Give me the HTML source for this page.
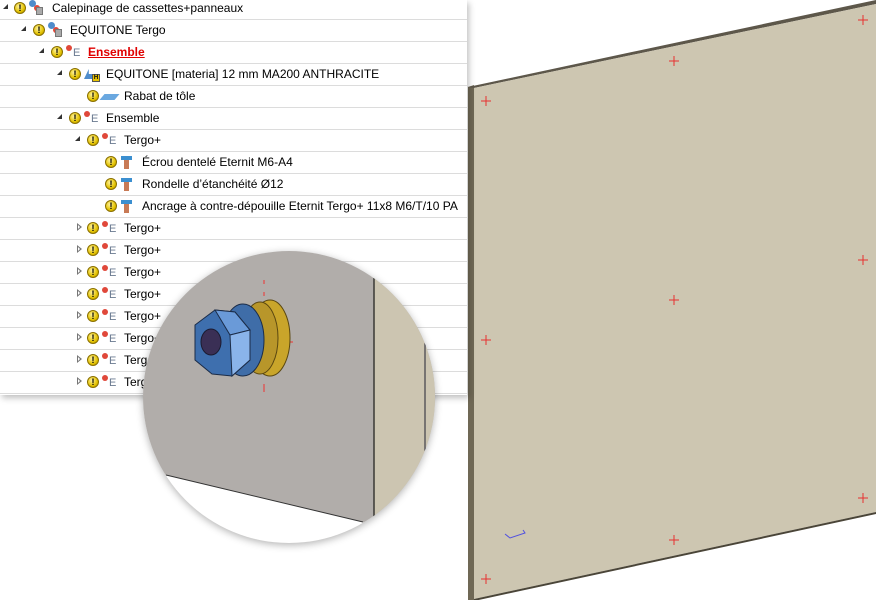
<!DOCTYPE html>
<html><head><meta charset="utf-8"><style>
*{margin:0;padding:0;box-sizing:border-box}
body{width:876px;height:600px;overflow:hidden;background:#fff;font-family:"Liberation Sans",sans-serif;font-size:12px;color:#000;position:relative}
#tree{position:absolute;left:0;top:0;width:467px;height:395px;background:#fff;box-shadow:2px 3px 6px rgba(0,0,0,.25);overflow:hidden}
.row{position:absolute;left:0;width:467px;height:22px;border-bottom:1px solid #dcdcdc}
.row span{position:absolute;top:3px;white-space:nowrap}
.tri{position:absolute;top:6px;width:0;height:0}
.tri.o{border-left:5px solid transparent;border-bottom:5px solid #333;border-top:0}
.tri.c{border-top:4px solid transparent;border-bottom:4px solid transparent;border-left:5px solid #777;top:5px}
.tri.c::after{content:"";position:absolute;left:-4px;top:-2px;border-top:2px solid transparent;border-bottom:2px solid transparent;border-left:2.5px solid #fff}
.ex{position:absolute;top:4px;width:12px;height:12px;border-radius:50%;background:radial-gradient(circle at 40% 35%,#fff3a0,#e3c200 60%,#a88a00);border:1px solid #8a7000;font:bold 9px/10px "Liberation Sans",sans-serif;text-align:center;color:#000}
.dot{position:absolute;top:3px;width:6px;height:6px;border-radius:50%;background:#e0483a}
.E{position:absolute;top:6px;font:11px/11px "Liberation Sans",sans-serif;color:#6a7a90}
.bl{position:absolute;top:2px;width:7px;height:7px;border-radius:50%;background:#4f8ccb}
.gr{position:absolute;top:9px;width:7px;height:8px;background:#aaa;border:1px solid #777}
.T{position:absolute;top:4px;width:11px;height:13px}
.T::before{content:"";position:absolute;left:0;top:0;width:11px;height:4px;background:#3b8fd0}
.T::after{content:"";position:absolute;left:3px;top:4px;width:5px;height:9px;background:#c87a55}
</style></head><body>
<svg width="876" height="600" style="position:absolute;left:0;top:0">
<polygon points="468,87 474,85 474,600 468,600" fill="#6f6855"/>
<polygon points="468,87 876,0 876,4 474,88" fill="#5d574a"/>
<polygon points="474,88 876,4 876,512 474,599" fill="#cdc6b1"/>
<polygon points="474,599 876,512 876,514 474,601" fill="#4a4538"/>
<g stroke="#e83030" stroke-width="1">
<path d="M486,96v10M481,101h10"/><path d="M674,56v10M669,61h10"/><path d="M863,15v10M858,20h10"/>
<path d="M486,335v10M481,340h10"/><path d="M674,295v10M669,300h10"/><path d="M863,255v10M858,260h10"/>
<path d="M486,574v10M481,579h10"/><path d="M674,535v10M669,540h10"/><path d="M863,493v10M858,498h10"/>
</g>
<path d="M505,534l5,4 15,-5 -2,-3" stroke="#5050e0" fill="none"/>
</svg>
<div id="tree">
<div class="row" style="top:-2px"><i class="tri o" style="left:3px"></i><i class="ex" style="left:14px">!</i><i class="bl" style="left:29px"></i><i class="dot" style="left:34px;top:7px"></i><i class="gr" style="left:36px"></i><span style="left:52px">Calepinage de cassettes+panneaux</span></div>
<div class="row" style="top:20px"><i class="tri o" style="left:21px"></i><i class="ex" style="left:33px">!</i><i class="bl" style="left:48px"></i><i class="dot" style="left:53px;top:7px"></i><i class="gr" style="left:55px"></i><span style="left:70px">EQUITONE Tergo</span></div>
<div class="row" style="top:42px"><i class="tri o" style="left:39px"></i><i class="ex" style="left:51px">!</i><i class="dot" style="left:66px"></i><i class="E" style="left:73px">E</i><span style="left:88px;color:#e00000;font-weight:bold;text-decoration:underline">Ensemble</span></div>
<div class="row" style="top:64px"><i class="tri o" style="left:57px"></i><i class="ex" style="left:69px">!</i><i style="position:absolute;left:84px;top:5px;width:12px;height:10px;background:#4f8ccb;clip-path:polygon(0 100%,40% 0,40% 50%,100% 50%,100% 100%)"></i><i style="position:absolute;left:92px;top:10px;width:8px;height:8px;background:#e8c400;border:1px solid #555;font:bold 6px/6px sans-serif;text-align:center;font-style:normal">H</i><span style="left:106px">EQUITONE [materia] 12 mm MA200 ANTHRACITE</span></div>
<div class="row" style="top:86px"><i class="ex" style="left:87px">!</i><i style="position:absolute;left:102px;top:8px;width:15px;height:6px;background:#6aa8e0;transform:skewX(-40deg)"></i><span style="left:124px">Rabat de tôle</span></div>
<div class="row" style="top:108px"><i class="tri o" style="left:57px"></i><i class="ex" style="left:69px">!</i><i class="dot" style="left:84px"></i><i class="E" style="left:91px">E</i><span style="left:106px">Ensemble</span></div>
<div class="row" style="top:130px"><i class="tri o" style="left:75px"></i><i class="ex" style="left:87px">!</i><i class="dot" style="left:102px"></i><i class="E" style="left:109px">E</i><span style="left:124px">Tergo+</span></div>
<div class="row" style="top:152px"><i class="ex" style="left:105px">!</i><i class="T" style="left:121px"></i><span style="left:142px">Écrou dentelé Eternit M6-A4</span></div>
<div class="row" style="top:174px"><i class="ex" style="left:105px">!</i><i class="T" style="left:121px"></i><span style="left:142px">Rondelle d’étanchéité Ø12</span></div>
<div class="row" style="top:196px"><i class="ex" style="left:105px">!</i><i class="T" style="left:121px"></i><span style="left:142px">Ancrage à contre-dépouille Eternit Tergo+ 11x8 M6/T/10 PA</span></div>
<div class="row" style="top:218px"><i class="tri c" style="left:77px"></i><i class="ex" style="left:87px">!</i><i class="dot" style="left:102px"></i><i class="E" style="left:109px">E</i><span style="left:124px">Tergo+</span></div>
<div class="row" style="top:240px"><i class="tri c" style="left:77px"></i><i class="ex" style="left:87px">!</i><i class="dot" style="left:102px"></i><i class="E" style="left:109px">E</i><span style="left:124px">Tergo+</span></div>
<div class="row" style="top:262px"><i class="tri c" style="left:77px"></i><i class="ex" style="left:87px">!</i><i class="dot" style="left:102px"></i><i class="E" style="left:109px">E</i><span style="left:124px">Tergo+</span></div>
<div class="row" style="top:284px"><i class="tri c" style="left:77px"></i><i class="ex" style="left:87px">!</i><i class="dot" style="left:102px"></i><i class="E" style="left:109px">E</i><span style="left:124px">Tergo+</span></div>
<div class="row" style="top:306px"><i class="tri c" style="left:77px"></i><i class="ex" style="left:87px">!</i><i class="dot" style="left:102px"></i><i class="E" style="left:109px">E</i><span style="left:124px">Tergo+</span></div>
<div class="row" style="top:328px"><i class="tri c" style="left:77px"></i><i class="ex" style="left:87px">!</i><i class="dot" style="left:102px"></i><i class="E" style="left:109px">E</i><span style="left:124px">Tergo+</span></div>
<div class="row" style="top:350px"><i class="tri c" style="left:77px"></i><i class="ex" style="left:87px">!</i><i class="dot" style="left:102px"></i><i class="E" style="left:109px">E</i><span style="left:124px">Tergo+</span></div>
<div class="row" style="top:372px"><i class="tri c" style="left:77px"></i><i class="ex" style="left:87px">!</i><i class="dot" style="left:102px"></i><i class="E" style="left:109px">E</i><span style="left:124px">Tergo+</span></div>
</div>
<div style="position:absolute;left:143px;top:251px;width:292px;height:292px;border-radius:50%;overflow:hidden;box-shadow:0 2px 8px rgba(0,0,0,.3)">
<svg width="292" height="292" viewBox="143 251 292 292" style="display:block">
<rect x="143" y="251" width="292" height="292" fill="#b1adaa"/>
<polygon points="374,278 435,300 435,543 374,543" fill="#ccc5b1"/>
<line x1="374" y1="278" x2="374" y2="543" stroke="#3a3a35" stroke-width="1.5"/>
<line x1="425" y1="340" x2="425" y2="460" stroke="#223" stroke-width="1"/>
<polygon points="166,475 363,522 374,543 143,543 143,475" fill="#fff"/>
<line x1="166" y1="475" x2="363" y2="522" stroke="#333" stroke-width="1"/>
<g stroke="#e33" stroke-width="1"><path d="M264,280v4M264,292v4M264,384v4M264,388v4M289,342h4"/></g>
<ellipse cx="270" cy="338" rx="20" ry="38" fill="#c9a52a" stroke="#5a4710"/>
<ellipse cx="260" cy="338" rx="18" ry="36" fill="#b8962a" stroke="#5a4710"/>
<ellipse cx="243" cy="340" rx="21" ry="36" fill="#3f6da8" stroke="#1b2c48"/>
<polygon points="195,325 215,310 235,312 250,330 250,360 232,376 212,374 195,360" fill="#3e6fae" stroke="#1b2c48"/>
<polygon points="215,310 235,312 250,330 230,335" fill="#6a9ad8" stroke="#1b2c48"/>
<polygon points="230,335 250,330 250,360 232,376" fill="#8ab4ea" stroke="#1b2c48"/>
<ellipse cx="211" cy="342" rx="10" ry="13" fill="#3a2f55" stroke="#1b1b30"/>
</svg></div>
</body></html>
